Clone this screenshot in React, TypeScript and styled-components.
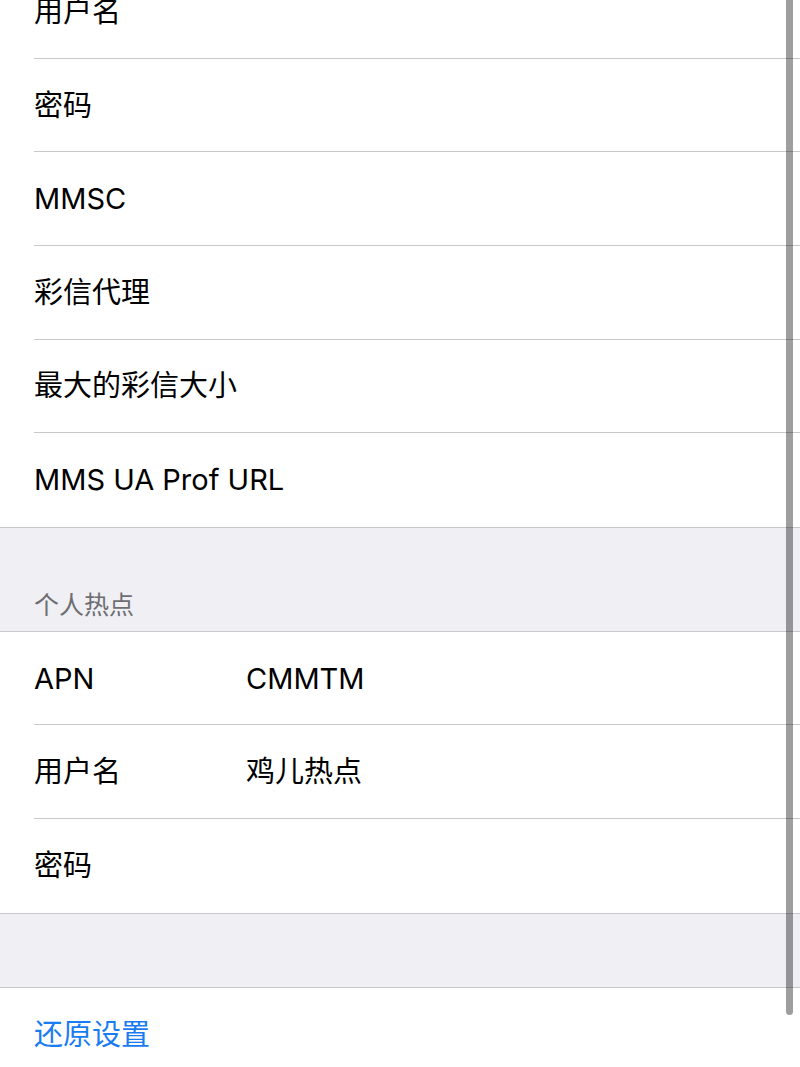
import React from "react";
import styled, { createGlobalStyle } from "styled-components";

const Global = createGlobalStyle`
  html, body {
    margin: 0;
    padding: 0;
    background: #ffffff;
    overflow: hidden;
  }
  body {
    font-family: Inter, "Noto Sans CJK SC", sans-serif;
    -webkit-font-smoothing: antialiased;
  }
`;

const Page = styled.div`
  position: relative;
  width: 800px;
  height: 1067px;
  overflow: hidden;
  background: #efeff4;
`;

const Scroller = styled.div`
  display: flex;
  flex-direction: column;
  margin-top: -34.8px;
`;

const Group = styled.div<{ $top?: boolean }>`
  display: flex;
  flex-direction: column;
  background: #ffffff;
  border-bottom: 1px solid #c8c7cc;
  border-top: ${(p) => (p.$top ? "1px solid #c8c7cc" : "none")};
`;

const Row = styled.div`
  display: flex;
  align-items: stretch;
  height: 93.6px;
  padding-left: 34px;
  box-sizing: border-box;
`;

const RowInner = styled.div<{ $last?: boolean }>`
  flex: 1;
  display: flex;
  align-items: center;
  border-bottom: ${(p) => (p.$last ? "none" : "1px solid #c8c7cc")};
  box-sizing: border-box;
`;

const Label = styled.span<{ $blue?: boolean }>`
  font-family: Inter, "Noto Sans CJK SC", sans-serif;
  font-size: 29px;
  color: ${(p) => (p.$blue ? "#1a7cf2" : "#000000")};
  width: ${(p) => (p.$blue ? "auto" : "212px")};
  white-space: nowrap;
  line-height: 1;
`;

const Value = styled.span`
  font-family: Inter, "Noto Sans CJK SC", sans-serif;
  font-size: 29px;
  color: #000000;
  line-height: 1;
  white-space: nowrap;
`;

const SectionHeader = styled.div`
  height: 103px;
  display: flex;
  align-items: flex-end;
  padding: 0 0 15px 34px;
  box-sizing: border-box;
  font-family: "Noto Sans CJK SC", sans-serif;
  font-size: 25px;
  line-height: 1;
  color: #6d6d72;
`;

const Spacer = styled.div`
  height: 73px;
`;

const ScrollIndicator = styled.div`
  position: absolute;
  top: -10px;
  bottom: 52px;
  right: 7px;
  width: 7px;
  border-radius: 4px;
  background: rgba(0, 0, 0, 0.38);
`;

type Item = { label: string; value?: string };

const mmsItems: Item[] = [
  { label: "用户名" },
  { label: "密码" },
  { label: "MMSC" },
  { label: "彩信代理" },
  { label: "最大的彩信大小" },
  { label: "MMS UA Prof URL" },
];

const hotspotItems: Item[] = [
  { label: "APN", value: "CMMTM" },
  { label: "用户名", value: "鸡儿热点" },
  { label: "密码" },
];

function ItemList({ items }: { items: Item[] }) {
  return (
    <>
      {items.map((it, i) => (
        <Row key={i}>
          <RowInner $last={i === items.length - 1}>
            <Label>{it.label}</Label>
            {it.value && <Value>{it.value}</Value>}
          </RowInner>
        </Row>
      ))}
    </>
  );
}

export default function App() {
  return (
    <>
      <Global />
      <Page>
        <Scroller>
          <Group>
            <ItemList items={mmsItems} />
          </Group>
          <SectionHeader>个人热点</SectionHeader>
          <Group $top>
            <ItemList items={hotspotItems} />
          </Group>
          <Spacer />
          <Group $top>
            <Row>
              <RowInner $last>
                <Label $blue>还原设置</Label>
              </RowInner>
            </Row>
          </Group>
        </Scroller>
        <ScrollIndicator />
      </Page>
    </>
  );
}
